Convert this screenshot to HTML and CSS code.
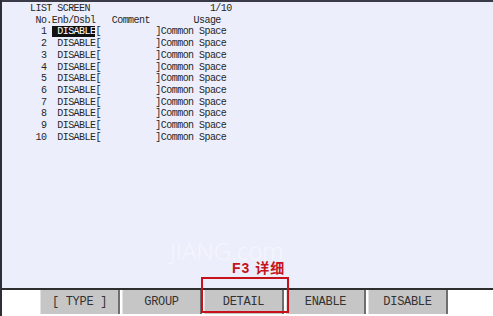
FILE: index.html
```html
<!doctype html>
<html>
<head>
  <title>LIST SCREEN</title>
  <link rel="stylesheet" href="styles.css">
</head>
<body>
  <div class="pendant">
    <div class="screen">
<pre class="listing">LIST SCREEN                      1/10
 No.Enb/Dsbl   Comment        Usage
  1 <span class="cursor"> DISABLE</span>[          ]Common Space
  2  DISABLE[          ]Common Space
  3  DISABLE[          ]Common Space
  4  DISABLE[          ]Common Space
  5  DISABLE[          ]Common Space
  6  DISABLE[          ]Common Space
  7  DISABLE[          ]Common Space
  8  DISABLE[          ]Common Space
  9  DISABLE[          ]Common Space
 10  DISABLE[          ]Common Space</pre>
      <div class="watermark">JIANG.com</div>
      <div class="callout">F3 详细</div>
    </div>
    <div class="softkeys">
      <span class="key">[ TYPE ]</span>
      <span class="key">GROUP</span>
      <span class="key">DETAIL</span>
      <span class="key">ENABLE</span>
      <span class="key">DISABLE</span>
    </div>
    <div class="focus-box"></div>
  </div>
</body>
</html>
```
FILE: styles.css
```css
body {
  margin: 0;
  background: #fff;
}
.pendant {
  position: relative;
  width: 493px;
  height: 316px;
  box-sizing: border-box;
  border-left: 2px solid #2e2e36;
  overflow: hidden;
}
.screen {
  position: relative;
  height: 288px;
  box-sizing: border-box;
  border-top: 2px solid #3a3a48;
  background: #eceefb;
}
.listing {
  margin: 0;
  padding: 1px 0 0 28px;
  font-family: "Liberation Mono", "Courier New", monospace;
  font-size: 10px;
  letter-spacing: -0.55px;
  line-height: 11.7px;
  color: #262626;
}
.cursor {
  background: #111;
  color: #fff;
}
.watermark {
  position: absolute;
  left: 168px;
  top: 238px;
  font-family: "Open Sans", "DejaVu Sans", sans-serif;
  font-size: 24px;
  line-height: 22px;
  font-weight: 300;
  color: rgba(255, 255, 255, .5);
}
.callout {
  position: absolute;
  left: 230px;
  top: 258px;
  font-family: "Liberation Sans", "Noto Sans CJK SC", sans-serif;
  font-size: 14px;
  line-height: 16px;
  font-weight: bold;
  letter-spacing: 1px;
  color: #c4141c;
}
.softkeys {
  display: flex;
  gap: 2px;
  height: 26px;
  box-sizing: border-box;
  border-top: 2px solid #2e2e2e;
  padding-left: 38px;
  background: #fff;
}
.key {
  display: flex;
  align-items: center;
  justify-content: center;
  width: 80px;
  box-sizing: border-box;
  background: #c6c6c6;
  border-left: 1px solid #e2e2e2;
  border-right: 2px solid #6e6e6e;
  font-family: "Liberation Mono", "Courier New", monospace;
  font-size: 12px;
  letter-spacing: -0.3px;
  color: #333;
}
.focus-box {
  position: absolute;
  left: 199px;
  top: 277px;
  width: 88px;
  height: 36px;
  box-sizing: border-box;
  border: 2px solid #c8121b;
}
```
